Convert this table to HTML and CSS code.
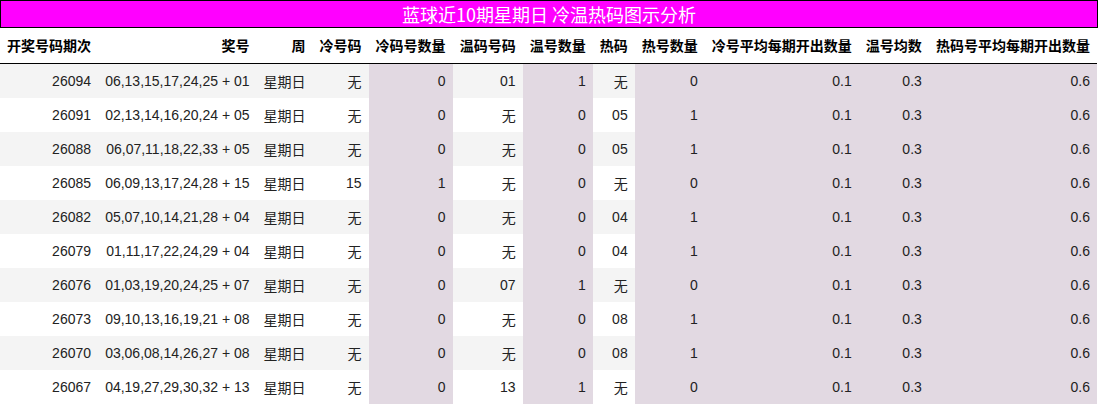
FILE: index.html
```html
<!DOCTYPE html>
<html lang="zh">
<head>
<meta charset="utf-8">
<title>蓝球近10期星期日 冷温热码图示分析</title>
<link rel="stylesheet" href="styles.css">
</head>
<body>
<div class="title">蓝球近10期星期日 冷温热码图示分析</div>
<table class="grid">
<thead>
<tr>
<th>开奖号码期次</th><th>奖号</th><th>周</th><th>冷号码</th><th>冷码号数量</th><th>温码号码</th><th>温号数量</th><th>热码</th><th>热号数量</th><th>冷号平均每期开出数量</th><th>温号均数</th><th>热码号平均每期开出数量</th>
</tr>
</thead>
<tbody>
<tr><td>26094</td><td>06,13,15,17,24,25 + 01</td><td>星期日</td><td>无</td><td class="hl">0</td><td>01</td><td class="hl">1</td><td>无</td><td class="hl">0</td><td class="hl">0.1</td><td class="hl">0.3</td><td class="hl">0.6</td></tr>
<tr><td>26091</td><td>02,13,14,16,20,24 + 05</td><td>星期日</td><td>无</td><td class="hl">0</td><td>无</td><td class="hl">0</td><td>05</td><td class="hl">1</td><td class="hl">0.1</td><td class="hl">0.3</td><td class="hl">0.6</td></tr>
<tr><td>26088</td><td>06,07,11,18,22,33 + 05</td><td>星期日</td><td>无</td><td class="hl">0</td><td>无</td><td class="hl">0</td><td>05</td><td class="hl">1</td><td class="hl">0.1</td><td class="hl">0.3</td><td class="hl">0.6</td></tr>
<tr><td>26085</td><td>06,09,13,17,24,28 + 15</td><td>星期日</td><td>15</td><td class="hl">1</td><td>无</td><td class="hl">0</td><td>无</td><td class="hl">0</td><td class="hl">0.1</td><td class="hl">0.3</td><td class="hl">0.6</td></tr>
<tr><td>26082</td><td>05,07,10,14,21,28 + 04</td><td>星期日</td><td>无</td><td class="hl">0</td><td>无</td><td class="hl">0</td><td>04</td><td class="hl">1</td><td class="hl">0.1</td><td class="hl">0.3</td><td class="hl">0.6</td></tr>
<tr><td>26079</td><td>01,11,17,22,24,29 + 04</td><td>星期日</td><td>无</td><td class="hl">0</td><td>无</td><td class="hl">0</td><td>04</td><td class="hl">1</td><td class="hl">0.1</td><td class="hl">0.3</td><td class="hl">0.6</td></tr>
<tr><td>26076</td><td>01,03,19,20,24,25 + 07</td><td>星期日</td><td>无</td><td class="hl">0</td><td>07</td><td class="hl">1</td><td>无</td><td class="hl">0</td><td class="hl">0.1</td><td class="hl">0.3</td><td class="hl">0.6</td></tr>
<tr><td>26073</td><td>09,10,13,16,19,21 + 08</td><td>星期日</td><td>无</td><td class="hl">0</td><td>无</td><td class="hl">0</td><td>08</td><td class="hl">1</td><td class="hl">0.1</td><td class="hl">0.3</td><td class="hl">0.6</td></tr>
<tr><td>26070</td><td>03,06,08,14,26,27 + 08</td><td>星期日</td><td>无</td><td class="hl">0</td><td>无</td><td class="hl">0</td><td>08</td><td class="hl">1</td><td class="hl">0.1</td><td class="hl">0.3</td><td class="hl">0.6</td></tr>
<tr><td>26067</td><td>04,19,27,29,30,32 + 13</td><td>星期日</td><td>无</td><td class="hl">0</td><td>13</td><td class="hl">1</td><td>无</td><td class="hl">0</td><td class="hl">0.1</td><td class="hl">0.3</td><td class="hl">0.6</td></tr>
</tbody>
</table>
</body>
</html>
```

FILE: styles.css
```css
html, body {
  margin: 0;
  padding: 0;
  background: #ffffff;
}
body {
  font-family: "Liberation Sans", "Noto Sans CJK SC", sans-serif;
  color: #222222;
}
.title {
  background: #ff00ff;
  border: 1px solid #000000;
  color: #ffffff;
  font-family: "Noto Sans CJK SC", sans-serif;
  font-size: 18px;
  line-height: 26px;
  height: 26px;
  text-align: center;
}
.grid {
  border-collapse: collapse;
  border-spacing: 0;
  font-size: 14px;
  width: 1097px;
}
.grid th,
.grid td {
  padding: 0 7px;
  text-align: right;
  vertical-align: middle;
  white-space: nowrap;
}
.grid th {
  height: 34px;
  padding-bottom: 1px;
  font-weight: bold;
  color: #000000;
  border-bottom: 1px solid #000000;
  font-family: "Noto Sans CJK SC", sans-serif;
}
.grid td {
  height: 34px;
}
.grid tbody tr:nth-child(odd) td {
  background: #f4f4f4;
}
.grid tbody tr td.hl {
  background: #e2d9e2;
}
```
